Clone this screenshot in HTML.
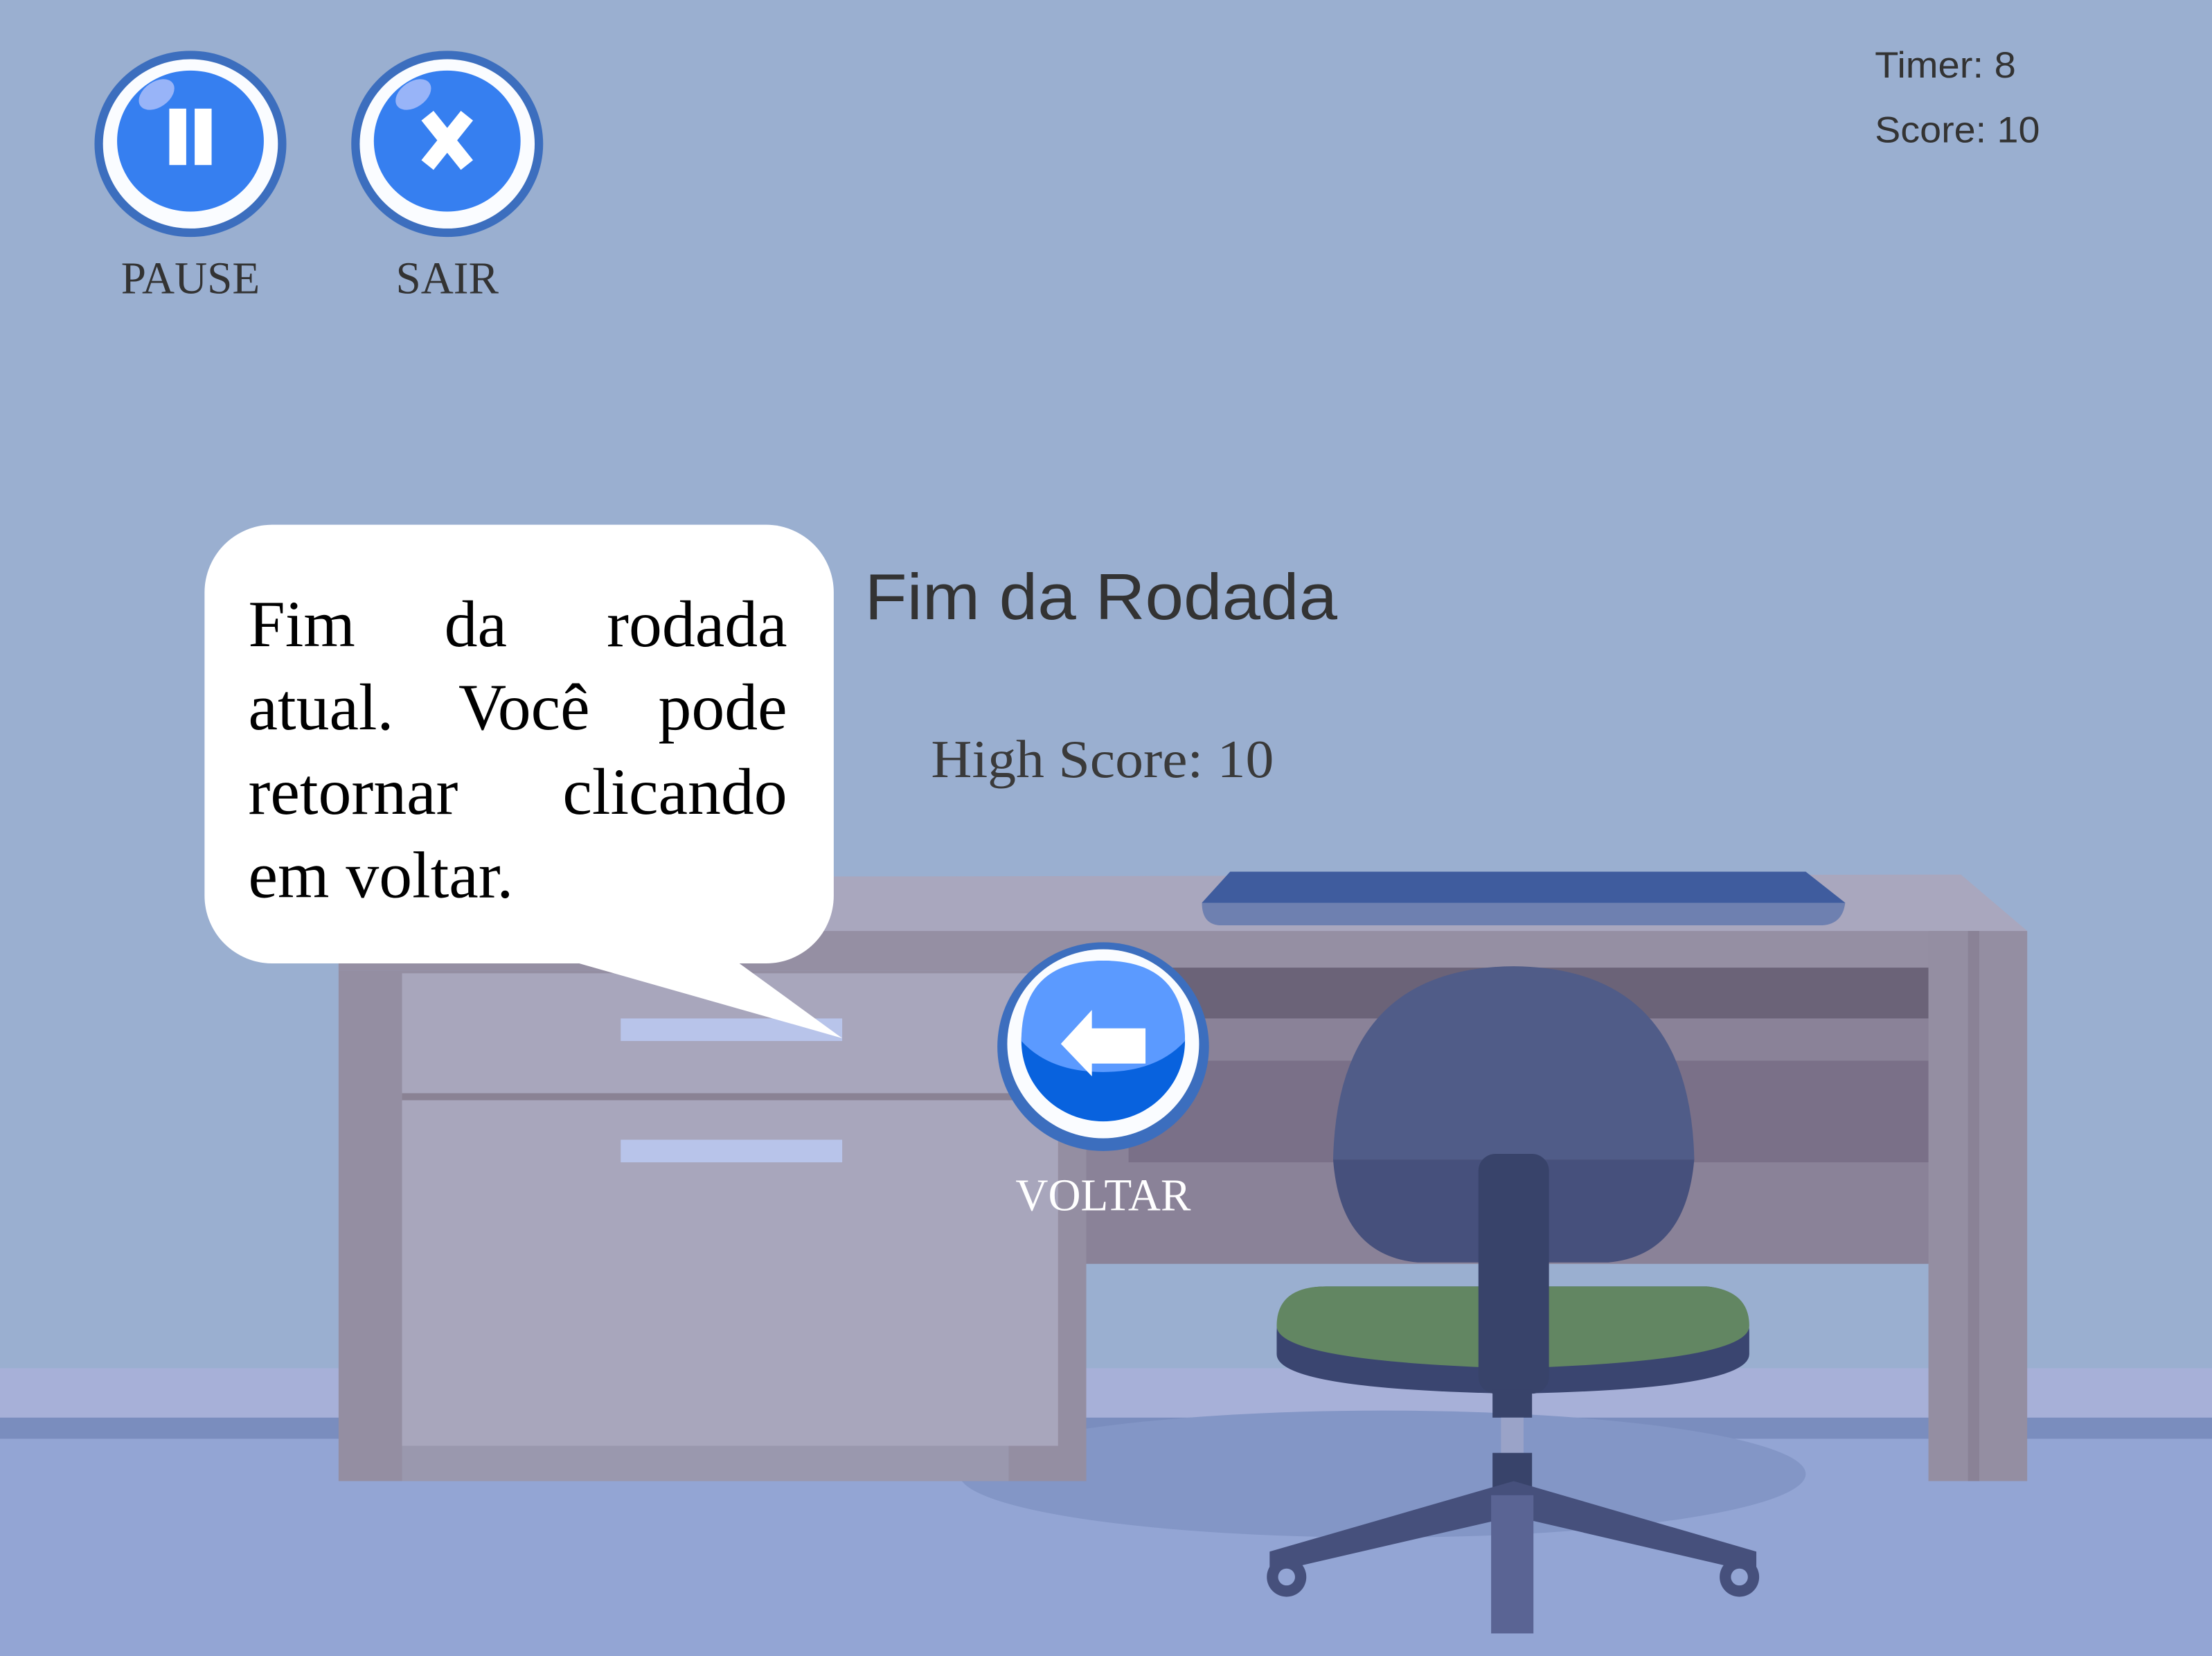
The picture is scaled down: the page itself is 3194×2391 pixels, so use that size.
<!DOCTYPE html>
<html><head><meta charset="utf-8"><style>
html,body{margin:0;padding:0;background:#9AAFD0;overflow:hidden}
svg{display:block}
</style></head><body>
<svg width="3194" height="2391" viewBox="0 0 1568 1174" preserveAspectRatio="none" xmlns="http://www.w3.org/2000/svg">
<rect width="1568" height="1174" fill="#9AAFD0"/>
<rect x="0" y="970" width="1568" height="36" fill="#A7B0D8"/>
<rect x="0" y="1005" width="1568" height="16" fill="#7A8DBE"/>
<rect x="0" y="1020" width="1568" height="154" fill="#93A5D4"/>
<ellipse cx="980" cy="1045" rx="300" ry="45" fill="#8396C6"/>
<polygon points="240,622 1390,620 1437,660 1437,688 240,688" fill="#A9A7BE"/>
<rect x="240" y="660" width="1155" height="28" fill="#958FA3"/>
<rect x="240" y="688" width="530" height="362" fill="#948EA2"/>
<rect x="285" y="690" width="465" height="335" fill="#A8A6BC"/>
<rect x="285" y="775" width="465" height="5" fill="#8A8294"/>
<rect x="285" y="1025" width="430" height="25" fill="#9A98AE"/>
<rect x="440" y="722" width="157" height="16" fill="#B8C4EA"/>
<rect x="440" y="808" width="157" height="16" fill="#B8C4EA"/>
<rect x="770" y="686" width="630" height="210" fill="#8A8298"/>
<rect x="800" y="686" width="567" height="36" fill="#6B6378"/>
<rect x="800" y="752" width="567" height="72" fill="#7A7088"/>
<rect x="1367" y="660" width="70" height="390" fill="#948EA2"/>
<rect x="1395" y="660" width="8" height="390" fill="#8A8296"/>
<path d="M852,640 L872,618 L1280,618 L1308,640 Q1306,656 1290,656 L866,656 Q852,656 852,640Z" fill="#6E80B0"/>
<path d="M852,640 L872,618 L1280,618 L1308,640Z" fill="#3F5C9E"/>
<path d="M945,822 Q948,686 1073,685 Q1198,686 1201,822Z" fill="#505C88"/>
<path d="M945,822 L1201,822 Q1195,890 1140,895 L1005,895 Q950,890 945,822Z" fill="#46507C"/>
<path d="M905,945 Q905,912 940,912 L1210,912 Q1240,915 1240,945 L1240,960 Q1240,985 1073,988 Q905,985 905,960Z" fill="#3A4570"/>
<path d="M905,940 Q905,912 940,912 L1210,912 Q1240,915 1240,940 Q1240,965 1073,970 Q905,965 905,940Z" fill="#628662"/>
<rect x="1048" y="818" width="50" height="170" rx="12" fill="#38436A"/>
<rect x="1058" y="985" width="28" height="20" fill="#38436A"/>
<rect x="1064" y="1005" width="16" height="28" fill="#9AA3C8"/>
<rect x="1058" y="1030" width="28" height="30" fill="#38436A"/>
<path d="M1073,1050 L900,1100 L900,1115 L1073,1075 L1245,1115 L1245,1100Z" fill="#46507C"/>
<rect x="1057" y="1060" width="30" height="98" fill="#5A6494"/>
<circle cx="912" cy="1118" r="14" fill="#46507C"/><circle cx="912" cy="1118" r="6" fill="#93A5D4"/>
<circle cx="1233" cy="1118" r="14" fill="#46507C"/><circle cx="1233" cy="1118" r="6" fill="#93A5D4"/>
<rect x="145" y="372" width="446" height="311" rx="48" fill="#fff"/>
<polygon points="400,680 597,736 520,680" fill="#fff"/>
<g font-family="Liberation Serif, serif" font-size="47" fill="#000">
<text x="176" y="458">Fim</text><text x="315" y="458">da</text><text x="558" y="458" text-anchor="end">rodada</text>
<text x="176" y="517">atual.</text><text x="325" y="517">Você</text><text x="558" y="517" text-anchor="end">pode</text>
<text x="176" y="577">retornar</text><text x="558" y="577" text-anchor="end">clicando</text>
<text x="176" y="636">em voltar.</text>
</g>
<text x="613" y="439" font-family="Liberation Sans, sans-serif" font-size="46" fill="#333" textLength="335" lengthAdjust="spacingAndGlyphs">Fim da Rodada</text>
<text x="660" y="551" font-family="Liberation Serif, serif" font-size="38" fill="#3a3a3a" textLength="243" lengthAdjust="spacingAndGlyphs">High Score: 10</text>
<g font-family="Liberation Sans, sans-serif" font-size="26" fill="#333">
<text x="1329" y="55" textLength="100" lengthAdjust="spacingAndGlyphs">Timer: 8</text><text x="1329" y="101" textLength="117" lengthAdjust="spacingAndGlyphs">Score: 10</text>
</g>
<ellipse cx="135" cy="102" rx="68" ry="66" fill="#3C6EBE"/>
<ellipse cx="135" cy="102" rx="62" ry="60" fill="#FAFCFF"/>
<ellipse cx="135" cy="100" rx="52" ry="50" fill="#367FF0"/>
<ellipse cx="111" cy="67" rx="14" ry="9" transform="rotate(-35 111 67)" fill="#98B4F8"/>
<rect x="120" y="77" width="12" height="40" fill="#fff"/>
<rect x="138" y="77" width="12" height="40" fill="#fff"/>
<ellipse cx="317" cy="102" rx="68" ry="66" fill="#3C6EBE"/>
<ellipse cx="317" cy="102" rx="62" ry="60" fill="#FAFCFF"/>
<ellipse cx="317" cy="100" rx="52" ry="50" fill="#367FF0"/>
<ellipse cx="293" cy="67" rx="14" ry="9" transform="rotate(-35 293 67)" fill="#98B4F8"/>
<path d="M303,82 L331,117 M331,82 L303,117" stroke="#fff" stroke-width="11"/>
<g font-family="Liberation Serif, serif" font-size="32" fill="#333" text-anchor="middle">
<text x="135" y="208">PAUSE</text><text x="317" y="208">SAIR</text>
</g>
<ellipse cx="782" cy="742" rx="75" ry="74" fill="#3C6EBE"/>
<ellipse cx="782" cy="740" rx="68" ry="67" fill="#FAFCFF"/>
<ellipse cx="782" cy="738" rx="58" ry="57" fill="#0862DE"/>
<path d="M724,738 Q724,681 782,681 Q840,681 840,738 Q820,760 782,760 Q744,760 724,738Z" fill="#5B9AFF"/>
<polygon points="752,740 774,716 774,729 812,729 812,754 774,754 774,763" fill="#fff"/>
<text x="782" y="858" font-family="Liberation Serif, serif" font-size="32" fill="#fff" text-anchor="middle">VOLTAR</text>
</svg>
</body></html>
